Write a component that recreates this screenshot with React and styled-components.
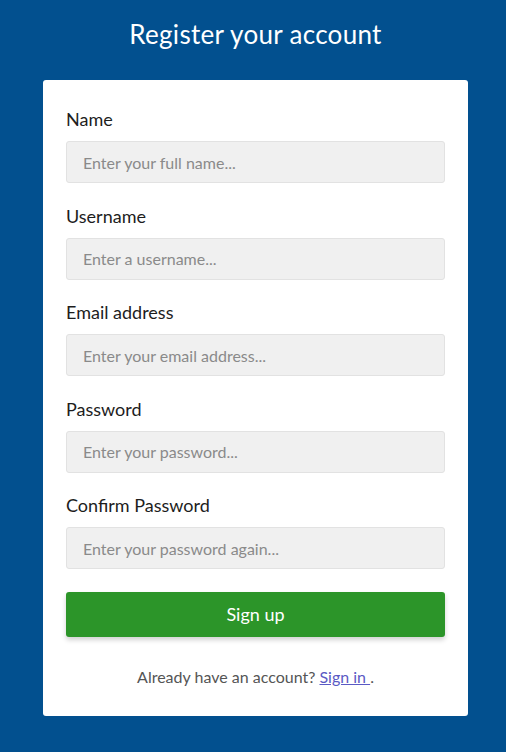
import React from "react";
import styled, { createGlobalStyle } from "styled-components";

const GlobalStyle = createGlobalStyle`
  html, body {
    margin: 0;
    padding: 0;
    background-color: #02508f;
    font-family: Lato, "Open Sans", sans-serif;
  }
  * {
    box-sizing: border-box;
  }
`;

const Page = styled.div`
  min-height: 752px;
  padding: 17px 38px 36px 43px;
`;

const Title = styled.h1`
  margin: 0 0 29px;
  height: 34px;
  line-height: 34px;
  text-align: center;
  color: #fff;
  font-size: 26px;
  font-weight: 400;
  letter-spacing: 0.3px;
`;

const Card = styled.form`
  background: #fff;
  border-radius: 3px;
  padding: 29px 23px 30px;
  display: flex;
  flex-direction: column;
`;

const Field = styled.div`
  display: flex;
  flex-direction: column;
  margin-bottom: 22.5px;
`;

const Label = styled.label`
  font-size: 18px;
  line-height: 20px;
  color: #1d1d1d;
  margin-bottom: 12px;
`;

const Input = styled.input`
  height: 42px;
  width: 100%;
  border: 1px solid #e2e2e2;
  border-radius: 3px;
  background: #f0f0f0;
  padding: 0 16px;
  font-family: inherit;
  font-size: 16px;
  color: #333;
  outline: none;

  &::placeholder {
    color: #8a8a8a;
  }
`;

const Button = styled.button`
  height: 45px;
  border: none;
  border-radius: 3px;
  background: #2c9529;
  color: #fff;
  font-family: inherit;
  font-size: 18px;
  cursor: pointer;
  box-shadow: 0 3px 5px rgba(0, 0, 0, 0.18);
`;

const Footer = styled.p`
  margin: 31px 0 0;
  text-align: center;
  font-size: 16px;
  line-height: 18px;
  color: #555;

  a {
    color: #5a5ac4;
    text-decoration: underline;
  }
`;

const fields = [
  { id: "name", label: "Name", type: "text", placeholder: "Enter your full name..." },
  { id: "username", label: "Username", type: "text", placeholder: "Enter a username..." },
  { id: "email", label: "Email address", type: "email", placeholder: "Enter your email address..." },
  { id: "password", label: "Password", type: "password", placeholder: "Enter your password..." },
  { id: "confirm", label: "Confirm Password", type: "password", placeholder: "Enter your password again..." },
];

const App = () => {
  return (
    <>
      <GlobalStyle />
      <Page>
        <Title>Register your account</Title>
        <Card onSubmit={(e) => e.preventDefault()}>
          {fields.map((f) => (
            <Field key={f.id}>
              <Label htmlFor={f.id}>{f.label}</Label>
              <Input id={f.id} type={f.type} placeholder={f.placeholder} />
            </Field>
          ))}
          <Button type="submit">Sign up</Button>
          <Footer>
            Already have an account? <a href="#">Sign in </a>.
          </Footer>
        </Card>
      </Page>
    </>
  );
};

export default App;
